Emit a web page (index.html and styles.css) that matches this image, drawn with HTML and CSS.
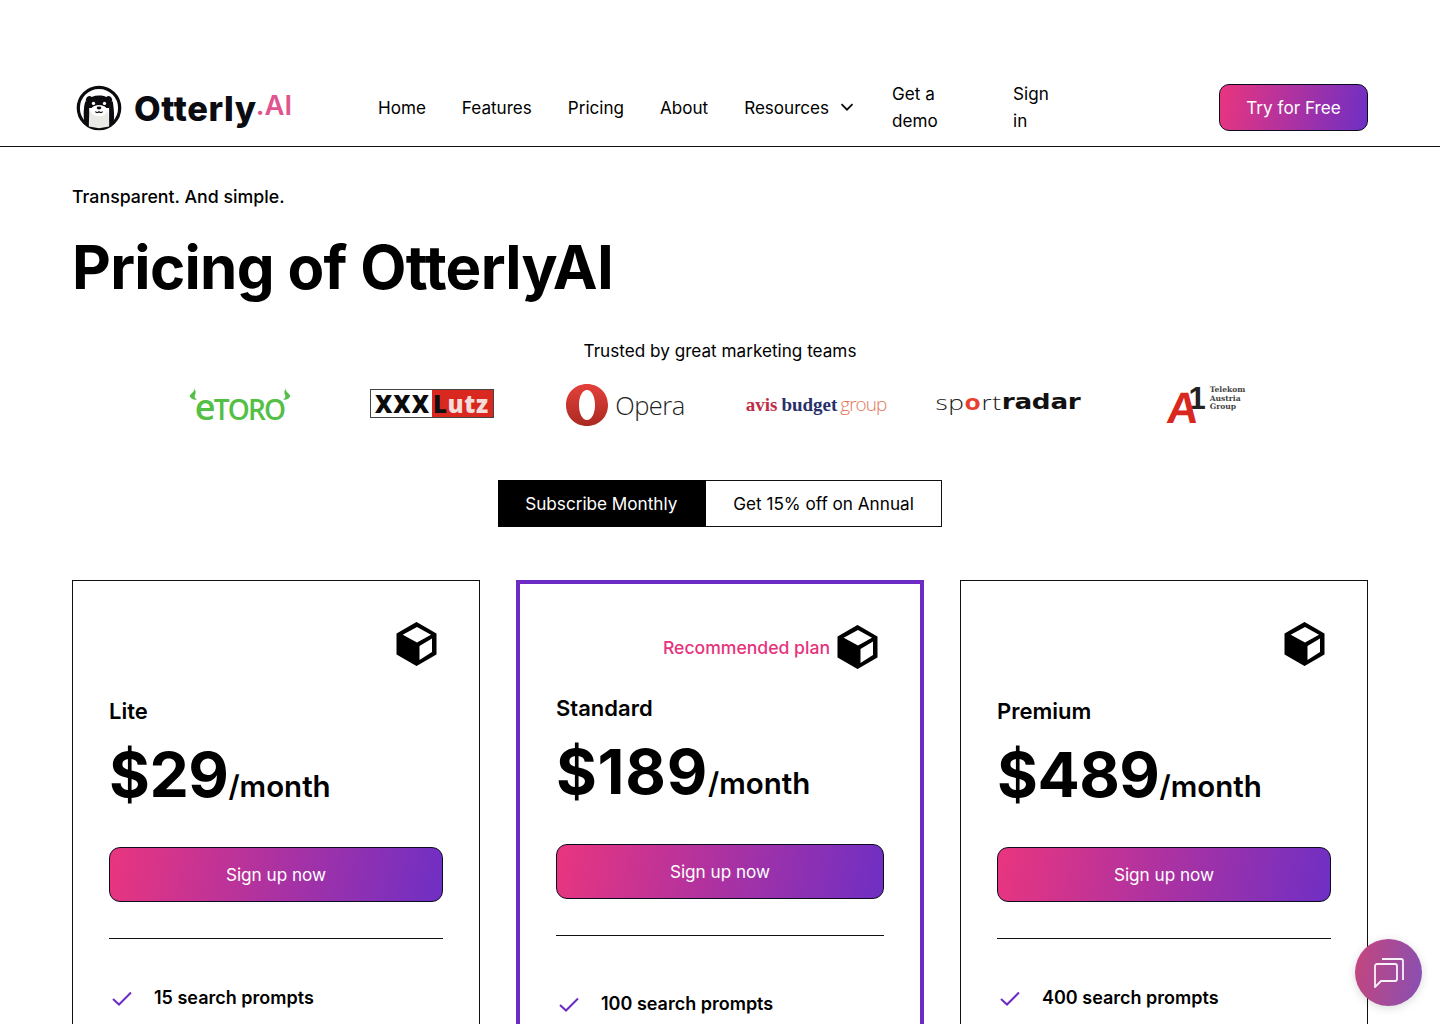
FILE: index.html
```html
<!DOCTYPE html>
<html lang="en">
<head>
<meta charset="utf-8">
<title>Pricing of OtterlyAI</title>
<link rel="stylesheet" href="styles.css">
</head>
<body>
<header class="site-header">
  <a class="brand" href="#">
    <svg class="otter" viewBox="0 0 50 50" width="46" height="46" aria-hidden="true">
      <circle cx="25" cy="25" r="22.500" fill="#fff" stroke="#0b0b0f" stroke-width="3.500"/>
      <path d="M11 15c1-3 4-4 6-2 5-2 11-2 16 0 2-2 5-1 6 2 1 2 0 4-2 4l-1 6H14l-1-6c-2 0-3-2-2-4z" fill="#0b0b0f"/>
      <path d="M10 18l4 0 1 27a22 22 0 0 1-6-4c-1-8-1-16 1-23zM36 18l4 0c1 7 2 15 1 23a22 22 0 0 1-5 4z" fill="#0b0b0f"/>
      <path d="M16 27c2-4 5-5 9-5s7 1 9 5c2 6 2 12 2 18l-11 2-11-2c0-6 0-12 2-18z" fill="#e9e9e6"/>
      <ellipse cx="25" cy="28" rx="9" ry="6" fill="#fff"/>
      <circle cx="19" cy="20" r="1.800" fill="#fff"/><circle cx="31" cy="20" r="1.800" fill="#fff"/>
      <ellipse cx="25" cy="25" rx="2.500" ry="1.600" fill="#0b0b0f"/>
      <path d="M21 29c2 2 3 1 4 0 1 1 2 2 4 0" fill="none" stroke="#0b0b0f" stroke-width="1.200"/>
    </svg>
    <span class="brand-name">Otterly</span><span class="brand-ai">.AI</span>
  </a>
  <nav class="nav">
    <a href="#">Home</a>
    <a href="#">Features</a>
    <a href="#">Pricing</a>
    <a href="#">About</a>
    <a href="#" class="nav-drop">Resources
      <svg viewBox="0 0 14 8" width="14" height="8" aria-hidden="true"><path d="M1.500 1.200 7 6.700l5.500-5.500" fill="none" stroke="#0b0b0f" stroke-width="1.800"/></svg>
    </a>
    <a href="#" class="nav-demo">Get a demo</a>
    <a href="#" class="nav-sign">Sign in</a>
  </nav>
  <a href="#" class="btn btn-try">Try for Free</a>
</header>

<main class="page">
  <p class="eyebrow">Transparent. And simple.</p>
  <h1 class="title">Pricing of OtterlyAI</h1>

  <p class="trusted">Trusted by great marketing teams</p>
  <div class="logos">
    <div class="logo etoro">
      <svg class="horn" viewBox="0 0 8 16" width="8" height="16" aria-hidden="true"><path d="M5 0C6 2 5 3 3 5 1 7 0 8 2 10c1 1 4 2 6 2-2-2-3-3-2-5 1-2 1-4-1-7z" fill="#53bf45"/></svg>
      <span class="etoro-text"><span class="etoro-e">e</span>TORO</span>
      <svg class="horn horn-r" viewBox="0 0 8 16" width="8" height="16" aria-hidden="true"><path d="M5 0C6 2 5 3 3 5 1 7 0 8 2 10c1 1 4 2 6 2-2-2-3-3-2-5 1-2 1-4-1-7z" fill="#53bf45"/></svg>
    </div>
    <div class="logo">
      <div class="xxx"><span class="xxx-a">XXX</span><span class="xxx-b"><span class="xxx-l">L</span>utz</span></div>
    </div>
    <div class="logo opera">
      <svg viewBox="0 0 44 44" width="44" height="44" aria-hidden="true">
        <defs><linearGradient id="op" x1="0" y1="0" x2="0" y2="1"><stop offset="0" stop-color="#e5403b"/><stop offset="1" stop-color="#a92a22"/></linearGradient></defs>
        <path fill-rule="evenodd" d="M22 1c12 0 21 9 21 21s-9 21-21 21S1 34 1 22 10 1 22 1zm0 6c-5 0-8 7-8 15s3 15 8 15 8-7 8-15-3-15-8-15z" fill="url(#op)"/>
      </svg>
      <span class="opera-text">Opera</span>
    </div>
    <div class="logo avis"><span class="avis-a">avis</span><span class="avis-b">budget</span><span class="avis-c">group</span></div>
    <div class="logo sport"><span class="sport-thin">sp<span class="sport-o">o</span>rt</span><span class="sport-bold">radar</span></div>
    <div class="logo a1">
      <span class="a1-a">A</span><span class="a1-one">1</span>
      <span class="a1-text">Telekom<br>Austria<br>Group</span>
    </div>
  </div>

  <div class="toggle-wrap">
    <div class="toggle">
      <a href="#" class="toggle-item is-active">Subscribe Monthly</a>
      <a href="#" class="toggle-item">Get 15% off on Annual</a>
    </div>
  </div>

  <section class="plans">
    <article class="plan">
      <div class="plan-top">
        <svg class="cube" viewBox="0 0 41 45" width="41" height="45" aria-hidden="true"><path d="M20.500 2 39.500 13v20l-19 11-19-11V13z" fill="#000" stroke="#000" stroke-width="2" stroke-linejoin="round"/><path d="M21 6l14 7.800-14 7.700-14.300-7.700zM23.500 25 36 17.500V31l-12.500 8z" fill="#fff"/></svg>
      </div>
      <h2 class="plan-name">Lite</h2>
      <p class="price"><span class="amount">$29</span><span class="per">/month</span></p>
      <a href="#" class="btn btn-sign">Sign up now</a>
      <hr class="rule">
      <ul class="features"><li><svg class="check" viewBox="0 0 20 15" width="20" height="15" aria-hidden="true"><path d="M1 8l6 5.500L19 1.500" fill="none" stroke="#6b2bc4" stroke-width="2"/></svg>15 search prompts</li></ul>
    </article>

    <article class="plan plan-featured">
      <div class="plan-top">
        <span class="reco">Recommended plan</span>
        <svg class="cube" viewBox="0 0 41 45" width="41" height="45" aria-hidden="true"><path d="M20.500 2 39.500 13v20l-19 11-19-11V13z" fill="#000" stroke="#000" stroke-width="2" stroke-linejoin="round"/><path d="M21 6l14 7.800-14 7.700-14.300-7.700zM23.500 25 36 17.500V31l-12.500 8z" fill="#fff"/></svg>
      </div>
      <h2 class="plan-name">Standard</h2>
      <p class="price"><span class="amount">$189</span><span class="per">/month</span></p>
      <a href="#" class="btn btn-sign">Sign up now</a>
      <hr class="rule">
      <ul class="features"><li><svg class="check" viewBox="0 0 20 15" width="20" height="15" aria-hidden="true"><path d="M1 8l6 5.500L19 1.500" fill="none" stroke="#6b2bc4" stroke-width="2"/></svg>100 search prompts</li></ul>
    </article>

    <article class="plan">
      <div class="plan-top">
        <svg class="cube" viewBox="0 0 41 45" width="41" height="45" aria-hidden="true"><path d="M20.500 2 39.500 13v20l-19 11-19-11V13z" fill="#000" stroke="#000" stroke-width="2" stroke-linejoin="round"/><path d="M21 6l14 7.800-14 7.700-14.300-7.700zM23.500 25 36 17.500V31l-12.500 8z" fill="#fff"/></svg>
      </div>
      <h2 class="plan-name">Premium</h2>
      <p class="price"><span class="amount">$489</span><span class="per">/month</span></p>
      <a href="#" class="btn btn-sign">Sign up now</a>
      <hr class="rule">
      <ul class="features"><li><svg class="check" viewBox="0 0 20 15" width="20" height="15" aria-hidden="true"><path d="M1 8l6 5.500L19 1.500" fill="none" stroke="#6b2bc4" stroke-width="2"/></svg>400 search prompts</li></ul>
    </article>
  </section>
</main>

<button class="chat" type="button" aria-label="Open chat">
  <svg viewBox="0 0 32 32" width="32" height="32" aria-hidden="true">
    <path d="M9 2h19a2 2 0 0 1 2 2v19M2 30V9a2 2 0 0 1 2-2h18a2 2 0 0 1 2 2v13a2 2 0 0 1-2 2H8z" fill="none" stroke="#fff" stroke-width="1.800" stroke-linejoin="round" opacity=".92"/>
  </svg>
</button>
</body>
</html>
```

FILE: styles.css
```css
* { box-sizing: border-box; }
html, body { height: 1024px; overflow: hidden; }
body {
  margin: 0;
  background: #fff;
  color: #000;
  font-family: Inter, "Liberation Sans", sans-serif;
  font-size: 17.15px;
  line-height: 27px;
}
a { color: inherit; text-decoration: none; }
p, h1, h2, ul { margin: 0; padding: 0; }

.site-header {
  height: 147px;
  padding: 68px 72px 0;
  display: flex;
  align-items: center;
  border-bottom: 1px solid #111;
}
.brand { display: flex; align-items: center; width: 306px; flex: none; padding-left: 4px; }
.otter { flex: none; margin-right: 12px; margin-top: 2px; }
.brand-name {
  font-weight: 800;
  font-size: 34.500px;
  line-height: 44px;
  letter-spacing: 0.6px;
  color: #0b0b12;
  margin-top: 3px;
}
.brand-ai { font-size: 27.500px; line-height: 40px; font-weight: 600; color: #e0558f; margin-top: -4px; margin-left: -1px; }
.nav { display: flex; align-items: center; gap: 36px; flex: 1; font-size: 17.080px; }
.nav-drop { display: flex; align-items: center; gap: 10px; margin-right: 2px; }
.nav-drop svg { margin-left: 1px; }
.nav-demo { width: 85px; }
.nav-sign { width: 50px; }
.btn { display: flex; align-items: center; justify-content: center; border: 1px solid #0b0b20; color: #fff; background: linear-gradient(100deg, #e9357f 0%, #6f2fc4 100%); }
.btn-try { width: 149px; height: 47px; border-radius: 10px; }

.page { height: 877px; overflow: hidden; padding: 36px 72px 0; }
.eyebrow { font-size: 17.750px; font-weight: 500; height: 27px; }
.title { font-size: 60px; line-height: 72px; font-weight: 700; letter-spacing: -0.7px; margin-top: 21px; }

.trusted { text-align: center; margin-top: 34px; }
.logos { display: grid; grid-template-columns: repeat(6, 192px); justify-content: center; height: 70px; margin-top: 6px; }
.logo { display: flex; align-items: center; justify-content: center; white-space: nowrap; }

.etoro { color: #53bf45; padding-top: 2px; }
.etoro-text { font-family: "Open Sans", sans-serif; font-size: 28px; line-height: 30px; font-weight: 600; letter-spacing: -1.800px; padding-top: 4px; }
.etoro-e { font-size: 36px; }
.horn { align-self: flex-start; margin-top: 16px; }
.horn:first-child { margin-right: -2px; }
.horn-r { transform: scaleX(-1); margin-left: -1px; }

.xxx { display: flex; width: 124px; height: 29px; border: 1px solid #444; font-family: "Open Sans", Inter, sans-serif; font-weight: 800; font-size: 24px; line-height: 27px; margin-bottom: 4px; }
.xxx-a { width: 61px; text-align: center; color: #0b0b0b; letter-spacing: 1px; padding-left: 2px; }
.xxx-b { flex: 1; background: #d8281f; color: #f4dcd8; letter-spacing: 0.6px; padding-left: 1px; }
.xxx-l { color: #111; }

.opera { gap: 6px; padding-left: 2px; }
.opera-text { font-family: "Open Sans", sans-serif; font-weight: 300; font-size: 25.500px; letter-spacing: -0.5px; color: #222; margin-top: 1px; }

.avis { gap: 5px; font-family: "Liberation Serif", serif; font-weight: 700; font-size: 19px; margin-bottom: 2px; }
.avis-a { color: #c02c45; }
.avis-b { color: #27306a; margin-left: -1px; }
.avis-c { font-family: "Open Sans", sans-serif; font-weight: 300; color: #e0775a; letter-spacing: -1px; margin-left: -2px; }

.sport { font-family: "DejaVu Sans", sans-serif; font-size: 21px; transform: scaleX(1.25); margin-bottom: 6px; }
.sport-thin { font-weight: 300; font-family: "Open Sans", sans-serif; color: #222; letter-spacing: 0.5px; }
.sport-o { color: #e8402c; font-weight: 700; }
.sport-bold { font-weight: 700; color: #111; letter-spacing: -0.2px; }

.a1 { font-family: "DejaVu Serif", serif; padding-left: 12px; }
.a1-a { font-family: "Liberation Sans", sans-serif; font-weight: 700; font-size: 44px; line-height: 40px; color: #d8281f; margin-top: 6px; transform: skewX(-6deg); }
.a1-one { font-family: "Liberation Sans", sans-serif; font-weight: 700; font-size: 31px; line-height: 30px; color: #222; margin: -12px 4px 0 -10px; }
.a1-text { font-size: 7.600px; line-height: 8.500px; font-weight: 700; color: #444; margin-top: -12px; }

.toggle-wrap { display: flex; justify-content: center; margin-top: 40px; }
.toggle { display: flex; height: 47px; border: 1px solid #111; }
.toggle-item { display: flex; align-items: center; padding: 0 27px; }
.toggle-item.is-active { background: #000; color: #fff; width: 208px; margin: -1px 0 -1px -1px; }

.plans { display: grid; grid-template-columns: repeat(3, 408px); gap: 36px; margin-top: 53px; }
.plan { border: 1px solid #111; padding: 36px; height: 520px; }
.plan-featured { border: 4px solid #6b2bc4; }
.plan-top { display: flex; align-items: center; justify-content: flex-end; gap: 7px; height: 56px; padding-right: 6px; padding-bottom: 4px; }
.plan-featured .plan-top { padding-bottom: 0; height: 55px; }
.plan-featured .cube { margin-top: -2px; }
.reco { color: #e5337c; font-size: 17.600px; font-weight: 500; }
.plan-name { font-size: 22px; line-height: 32px; font-weight: 600; margin-top: 22px; }
.plan-featured .plan-name { margin-top: 17px; }
.price { display: flex; align-items: baseline; margin-top: 11px; height: 72px; }
.amount { font-size: 62.500px; line-height: 72px; font-weight: 700; letter-spacing: -0.5px; }
.plan-featured .amount { letter-spacing: 0.7px; }
.per { font-size: 29.500px; font-weight: 600; line-height: 36px; }
.btn-sign { height: 55px; border-radius: 11px; margin-top: 37px; }
.rule { border: 0; border-top: 1px solid #111; margin: 36px 0 0; }
.features { list-style: none; margin-top: 45px; }
.plan-featured .features { margin-top: 54px; }
.features li { display: flex; align-items: center; gap: 22px; font-size: 18px; line-height: 28px; font-weight: 600; padding-left: 3px; }

.chat {
  position: fixed;
  left: 1355px;
  top: 939px;
  width: 67px;
  height: 67px;
  border: 0;
  padding: 0;
  border-radius: 50%;
  display: flex;
  align-items: center;
  justify-content: center;
  background: linear-gradient(100deg, #c6457c 0%, #8650b4 100%);
  box-shadow: 0 2px 10px rgba(0, 0, 0, 0.15);
}
```
